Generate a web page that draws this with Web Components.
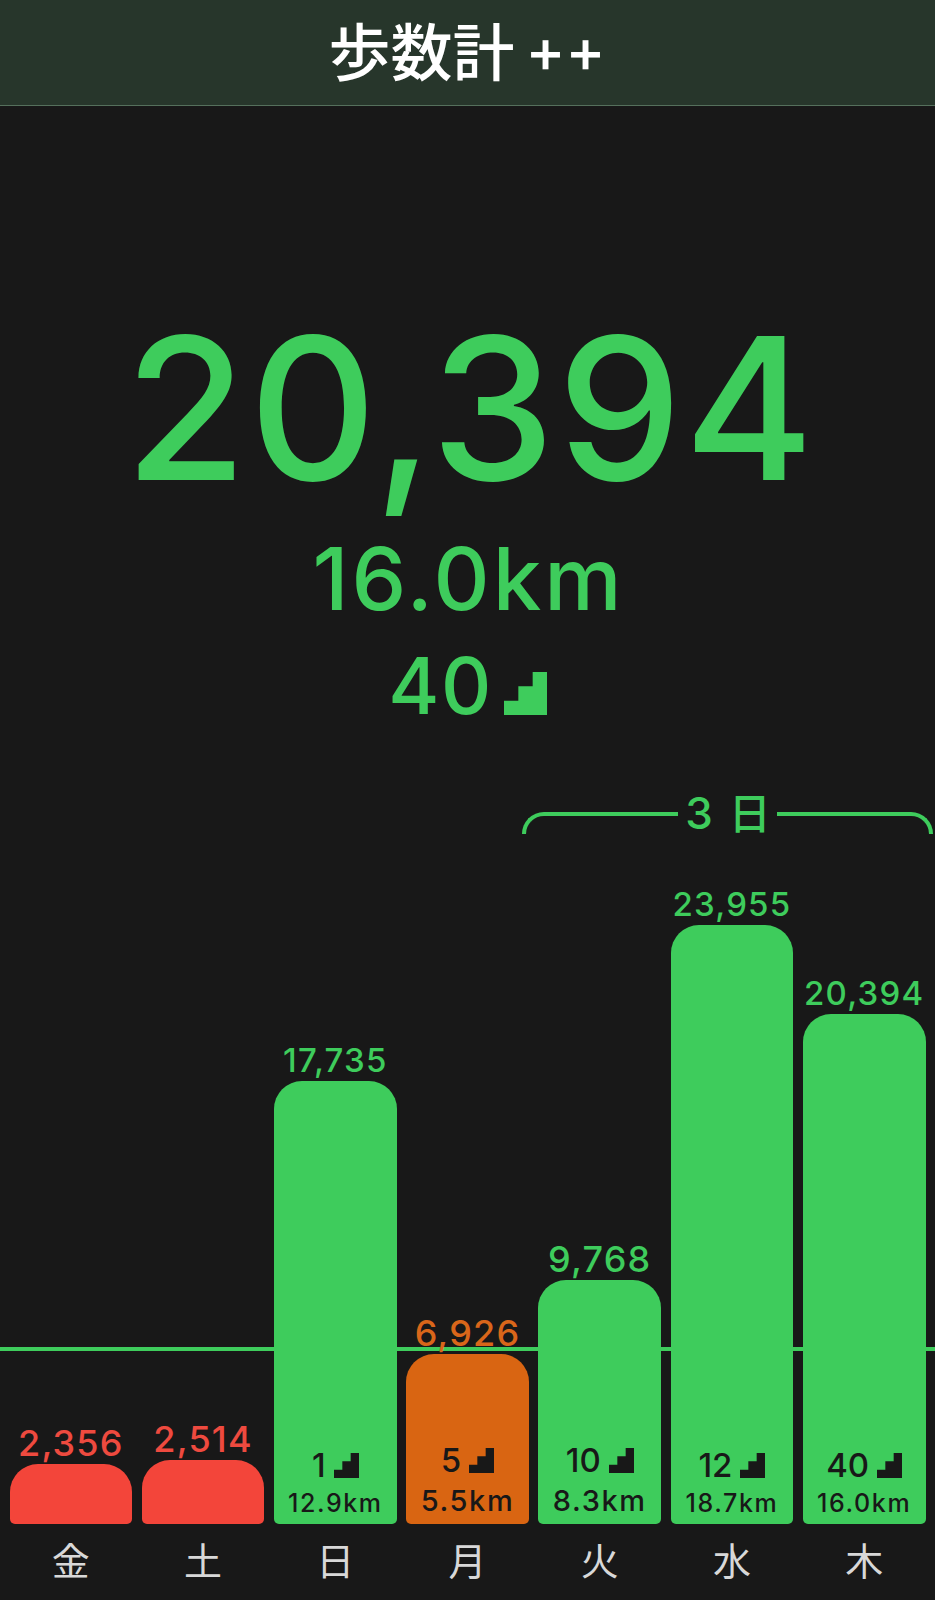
<!DOCTYPE html>
<html lang="ja">
<head>
<meta charset="utf-8">
<title>歩数計++</title>
<style>
html,body{margin:0;background:#181818}
body{font-family:Inter,"Noto Sans CJK JP",sans-serif;font-optical-sizing:none;width:935px;height:1600px;overflow:hidden}
</style>
</head>
<body>
<app-header>歩数計<span slot="plus">++</span></app-header>
<step-summary steps="20,394" km="16.0km" flights="40"></step-summary>
<goal-bracket num="3" unit="日"></goal-bracket>
<week-chart>
  <day-bar value="2,356" h="60" tone="red" vs="36" day="金"></day-bar>
  <day-bar value="2,514" h="64" tone="red" vs="36" day="土"></day-bar>
  <day-bar value="17,735" h="443" flights="1" km="12.9km" day="日"></day-bar>
  <day-bar value="6,926" h="170" tone="orange" vs="36" flights="5" km="5.5km" ks="29" day="月"></day-bar>
  <day-bar value="9,768" h="244" vs="36" flights="10" km="8.3km" ks="29" day="火"></day-bar>
  <day-bar value="23,955" h="599" flights="12" km="18.7km" day="水"></day-bar>
  <day-bar value="20,394" h="510" flights="40" km="16.0km" day="木"></day-bar>
</week-chart>
<script>
const mk=(html)=>{const t=document.createElement('template');t.innerHTML=html;return t};

customElements.define('stair-icon',class extends HTMLElement{
  connectedCallback(){
    const r=this.shadowRoot||this.attachShadow({mode:'open'});
    r.innerHTML=`<style>:host{display:inline-block;line-height:0;width:var(--s,25px);height:var(--s,25px)}svg{display:block;width:100%;height:100%;fill:currentColor}</style>
    <svg viewBox="0 0 3 3" aria-hidden="true"><polygon points="0,3 0,2 1,2 1,1 2,1 2,0 3,0 3,3"/></svg>`;
  }
});

const headerT=mk(`<style>
:host{display:flex;justify-content:center;align-items:center;box-sizing:border-box;height:106px;background:#27362b;border-bottom:1px solid #55705c;color:#fff;font-family:"Noto Sans CJK JP",sans-serif;font-weight:500;font-size:62px;line-height:1}
.p{font-family:Inter,sans-serif;font-weight:500;font-size:60px;margin-left:10px;display:inline-flex;gap:4px;line-height:1;position:relative;top:-3px}
.t{position:relative;top:-4px;left:-1px;display:flex}
</style><div class="t"><slot></slot></div><div class="p"><slot name="plus"></slot></div>`);
customElements.define('app-header',class extends HTMLElement{
  connectedCallback(){const r=this.attachShadow({mode:'open'});r.append(headerT.content.cloneNode(true))}
});

const sumT=mk(`<style>
:host{display:flex;flex-direction:column;align-items:center;color:#3ecc5c;font-family:Inter,sans-serif;font-weight:500}
.big{margin-top:222px;padding-left:6px;font-size:198px;line-height:160px;letter-spacing:2.2px}
.km{margin-top:56px;padding-left:2px;font-size:87px;line-height:70px;letter-spacing:3px}
.fl{margin-top:42px;display:flex;align-items:flex-end;gap:11px;font-size:78px;line-height:60px;height:60px;letter-spacing:1.5px}
stair-icon{--s:43px;margin-bottom:1px}
</style><div class="big"></div><div class="km"></div><div class="fl"><span></span><stair-icon></stair-icon></div>`);
customElements.define('step-summary',class extends HTMLElement{
  connectedCallback(){const r=this.attachShadow({mode:'open'});r.append(sumT.content.cloneNode(true));
    r.querySelector('.big').textContent=this.getAttribute('steps');
    r.querySelector('.km').textContent=this.getAttribute('km');
    r.querySelector('.fl span').textContent=this.getAttribute('flights');}
});

const brT=mk(`<style>
:host{display:flex;box-sizing:border-box;height:42px;margin:76.5px 2px 0 522px;color:#3ecc5c;font-family:Inter,"Noto Sans CJK JP",sans-serif;font-weight:500}
.s{flex:1;height:18px;margin-top:19px;border-top:4px solid currentColor}
.l{border-left:4px solid currentColor;border-top-left-radius:22px}
.r{border-right:4px solid currentColor;border-top-right-radius:22px}
.m{display:flex;gap:17px;padding:0 6px;line-height:40px;height:40px;align-items:center}
.n{font-size:44px;position:relative;left:1px}
.u{font-family:"Noto Sans CJK JP",sans-serif;font-size:42px;font-weight:500;position:relative;top:-2px}
</style><div class="s l"></div><div class="m"><span class="n"></span><span class="u"></span></div><div class="s r"></div>`);
customElements.define('goal-bracket',class extends HTMLElement{
  connectedCallback(){const r=this.attachShadow({mode:'open'});r.append(brT.content.cloneNode(true));
    r.querySelector('.n').textContent=this.getAttribute('num');
    r.querySelector('.u').textContent=this.getAttribute('unit');}
});

const chartT=mk(`<style>
:host{display:block;position:relative}
.g{display:grid;grid-template-columns:repeat(7,1fr);column-gap:9.5px;padding:0 9.5px;height:756px;position:relative}
.goal{position:absolute;left:0;right:0;top:512.5px;height:4px;background:#3ecc5c}
</style><div class="goal"></div><div class="g"><slot></slot></div>`);
customElements.define('week-chart',class extends HTMLElement{
  connectedCallback(){const r=this.attachShadow({mode:'open'});r.append(chartT.content.cloneNode(true))}
});

const barT=mk(`<style>
:host{display:flex;flex-direction:column;justify-content:flex-end;align-items:stretch;min-width:0;position:relative;--c:#3ecc5c;--t:#3ecc5c}
:host([tone=red]){--c:#f3453a;--t:#ee4a3f}
:host([tone=orange]){--c:#d96512;--t:#d9661a}
.v{text-align:center;color:var(--t);line-height:33px;margin-bottom:4.5px;white-space:nowrap;font-weight:500;letter-spacing:1.2px}
.b{box-sizing:border-box;background:var(--c);border-radius:28px 28px 5px 5px;display:flex;flex-direction:column;justify-content:flex-end;align-items:center;padding-bottom:8.5px;color:#181818;white-space:nowrap;font-weight:500}
.f{display:flex;align-items:center;justify-content:center;gap:8px;font-size:33px;line-height:34px;height:34px;margin-bottom:9px}
.k{letter-spacing:1.6px}
stair-icon{--s:25px;margin-top:1px}
.d{height:66.5px;box-sizing:border-box;padding-top:10px;line-height:50px;font-size:38px;text-align:center;color:#d8d8d8;font-family:"Noto Sans CJK JP",sans-serif}
</style><div class="v"></div><div class="b"></div><div class="d"></div>`);
customElements.define('day-bar',class extends HTMLElement{
  connectedCallback(){const r=this.attachShadow({mode:'open'});r.append(barT.content.cloneNode(true));
    const g=a=>this.getAttribute(a);
    const v=r.querySelector('.v');v.textContent=g('value');v.style.fontSize=(g('vs')||33)+'px';
    const b=r.querySelector('.b');b.style.height=g('h')+'px';
    if(g('flights')){
      const f=document.createElement('div');f.className='f';
      const s=document.createElement('span');s.textContent=g('flights');
      f.append(s,document.createElement('stair-icon'));
      const k=document.createElement('div');k.className='k';k.textContent=g('km');
      const ks=+(g('ks')||25);k.style.fontSize=ks+'px';k.style.lineHeight=(ks===29?30:25)+'px';
      b.append(f,k);
    }
    r.querySelector('.d').textContent=g('day');}
});
</script>
</body>
</html>
